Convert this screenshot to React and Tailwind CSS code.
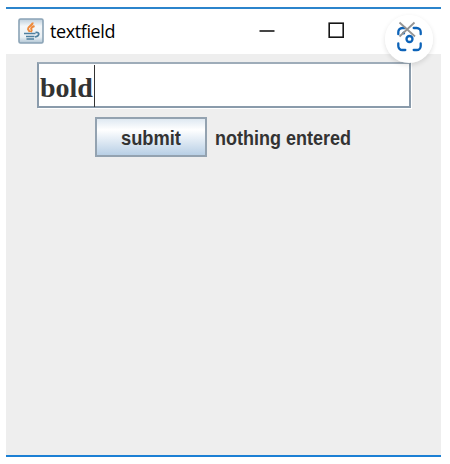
function JavaIcon() {
  return (
    <svg width="26" height="26" viewBox="0 0 26 26" fill="none" className="-mt-[2px] block shrink-0">
      <defs>
        <linearGradient id="java-bg" x1="0" y1="0" x2="0" y2="1">
          <stop offset="0" stopColor="#bccedc" />
          <stop offset="0.3" stopColor="#f4f7f9" />
          <stop offset="0.75" stopColor="#eaf0f4" />
          <stop offset="1" stopColor="#b0c5d4" />
        </linearGradient>
      </defs>
      <rect x="1" y="1" width="24" height="24" rx="1.500" fill="url(#java-bg)" stroke="#8ba3b6" strokeWidth="1.6" />
      <path d="M14.500 4.500c1 2.500-5 4-4.500 6.500 .2 1 1.500 1.700 1.700 3M16.500 8c-3 1.300-4 2.700-3 3.700 .6.800 0 1.600-.8 2.300" stroke="#ee8a3c" strokeWidth="2" />
      <path d="M6 15.500h11.500M8 18.500h8.500M17.500 14.500c4.500-1 4.500 3.500-.5 4.500M8.500 21h7.500" stroke="#4f809f" strokeWidth="1.700" />
    </svg>
  );
}

function LensButton() {
  return (
    <div className="absolute left-[379px] top-[6px] h-[48px] w-[48px] rounded-full bg-white/95 shadow-[0_2px_5px_rgba(0,0,0,0.12)]">
      <svg width="48" height="48" viewBox="0 1 48 48" fill="none" className="block">
        <g stroke="#0d63b8" strokeWidth="2.300" strokeLinecap="round">
          <path d="M13.300 20.200v-2.200a4 4 0 0 1 4-4h2.700" />
          <path d="M28.700 14h3a4 4 0 0 1 4 4v2.200" />
          <path d="M13.300 29.500v2.500a4 4 0 0 0 4 4h3" />
          <path d="M28.700 36h3a4 4 0 0 0 4-4v-2.500" />
          <circle cx="24.500" cy="25" r="3" />
        </g>
        <circle cx="18.700" cy="18.900" r="1.500" fill="#0d63b8" />
        <path d="M14.500 8.500L30 22.500M29.500 8.500L14.500 22.500" stroke="#959595" strokeWidth="1.800" />
      </svg>
    </div>
  );
}

export default function App() {
  return (
    <div className="h-[464px] w-[450px] overflow-hidden bg-white pl-[6px] pt-[7px] font-['Liberation_Sans',sans-serif]">
      <div className="relative flex h-[450px] w-[435px] flex-col border-b-2 border-t-2 border-b-[#1b7fd4] border-t-[#2b84cc] bg-[#eeeeee]">
        <header className="flex h-[45px] shrink-0 items-center bg-white pl-[12px]">
          <JavaIcon />
          <span className="-mt-[2px] ml-[6px] w-[66px] whitespace-nowrap font-['Open_Sans','Noto_Sans',sans-serif] text-[18px] leading-[24px] tracking-[-0.4px] text-black">textfield</span>
          <svg width="90" height="20" viewBox="0 0 90 20" fill="none" stroke="#161616" className="-mt-[2px] ml-[143px] block">
            <path d="M0.500 10h15" strokeWidth="1.600" />
            <rect x="70.200" y="2.200" width="14" height="14" strokeWidth="1.600" />
          </svg>
        </header>
        <main className="flex flex-col items-start">
          <div className="ml-[31px] mt-[8px] flex h-[46px] w-[374px] items-start border-2 border-[#8a9bab] border-t-[#9eacb9] bg-white shadow-[1px_1px_0_#ffffff]">
            <span className="ml-[1px] mt-[8px] w-[54px] whitespace-nowrap font-['Liberation_Serif',serif] text-[28px] font-bold leading-[32px] text-[#333333]">bold</span>
            <i className="mt-[1px] h-[42px] w-px bg-[#333333]" />
          </div>
          <div className="ml-[89px] mt-[9px] flex h-[40px] items-center">
            <button className="h-[40px] w-[112px] border-2 border-[#93a2b0] bg-linear-to-b from-[#dfe9f2] via-white via-30% to-[#b8cfe5] text-[18.3px] font-bold leading-[22px] text-[#333333]">
              <span className="block translate-y-[1px] scale-y-110">submit</span>
            </button>
            <span className="ml-[8px] translate-y-[1px] scale-y-110 whitespace-nowrap text-[18px] font-bold leading-[22px] text-[#333333]">nothing entered</span>
          </div>
        </main>
        <LensButton />
      </div>
    </div>
  );
}
